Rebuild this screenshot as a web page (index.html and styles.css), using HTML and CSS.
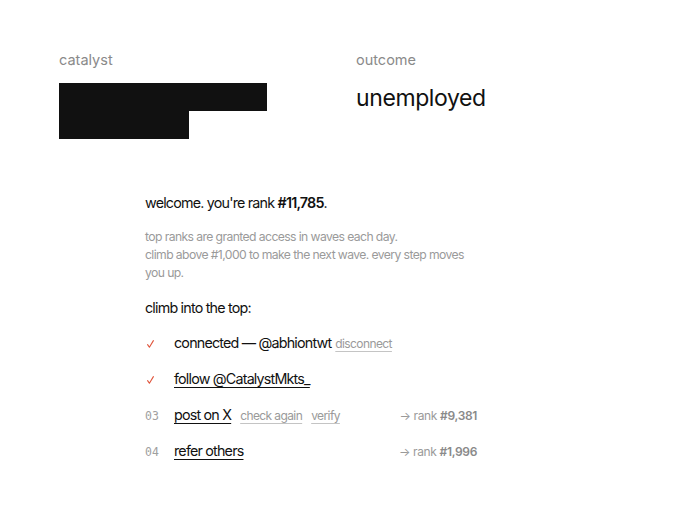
FILE: index.html
```html
<!DOCTYPE html>
<html>
<head>
<meta charset="utf-8">
<link rel="stylesheet" href="styles.css">
</head>
<body>
<div class="page">
  <header class="top">
    <div class="col">
      <div class="label">catalyst</div>
      <div class="redact">
        <div class="bar bar1"></div>
        <div class="bar bar2"></div>
      </div>
    </div>
    <div class="col">
      <div class="label">outcome</div>
      <div class="outcome">unemployed</div>
    </div>
  </header>
  <main class="panel">
    <p class="welcome">welcome. you're rank <b>#11,785</b>.</p>
    <p class="info">top ranks are granted access in waves each day.<br>climb above #1,000 to make the next wave. every step moves you up.</p>
    <p class="climb">climb into the top:</p>
    <ul class="steps">
      <li class="step">
        <span class="mark"><svg class="check" width="7" height="8" viewBox="0 0 7 8"><polyline points="0.6,4.6 2.4,7.2 6.4,0.6" fill="none" stroke="#e0553c" stroke-width="1.1" stroke-linecap="round" stroke-linejoin="round"/></svg></span>
        <span class="main">connected — @abhiontwt</span>
        <a class="sub first">disconnect</a>
      </li>
      <li class="step">
        <span class="mark"><svg class="check" width="7" height="8" viewBox="0 0 7 8"><polyline points="0.6,4.6 2.4,7.2 6.4,0.6" fill="none" stroke="#e0553c" stroke-width="1.1" stroke-linecap="round" stroke-linejoin="round"/></svg></span>
        <a class="main link">follow @CatalystMkts_</a>
      </li>
      <li class="step">
        <span class="mark num">03</span>
        <a class="main link">post on X</a>
        <a class="sub">check again</a>
        <a class="sub">verify</a>
        <span class="rank">→ rank <b>#9,381</b></span>
      </li>
      <li class="step">
        <span class="mark num">04</span>
        <a class="main link">refer others</a>
        <span class="rank">→ rank <b>#1,996</b></span>
      </li>
    </ul>
  </main>
</div>
</body>
</html>
```
FILE: styles.css
```css
* { box-sizing: border-box; }
html, body { margin: 0; padding: 0; background: #fff; }
body {
  font-family: Inter, "Noto Sans", sans-serif;
  color: #111;
  -webkit-font-smoothing: antialiased;
}
.page {
  padding: 51px 0 0 59px;
}
.top {
  display: grid;
  grid-template-columns: 297px 1fr;
}
.label {
  font-size: 14.5px;
  color: #8a8a8a;
  line-height: 18px;
}
.redact {
  margin-top: 14px;
}
.bar { background: #111; height: 28px; }
.bar1 { width: 208px; }
.bar2 { width: 130px; }
.outcome {
  margin-top: 15px;
  font-size: 23px;
  line-height: 28px;
  letter-spacing: -0.4px;
  color: #111;
}
.panel {
  margin: 54px 0 0 86px;
  width: 332px;
}
.welcome {
  margin: 0;
  font-size: 14.3px;
  line-height: 20px;
  letter-spacing: -0.8px;
}
.welcome b { font-weight: 600; }
.info {
  margin: 15px 0 0;
  font-size: 12.2px;
  line-height: 18px;
  color: #9a9a9a;
  letter-spacing: -0.6px;
}
.climb {
  margin: 16px 0 0;
  font-size: 14.3px;
  line-height: 20px;
  letter-spacing: -0.8px;
}
.steps {
  list-style: none;
  margin: 16px 0 0;
  padding: 0;
}
.step {
  display: flex;
  align-items: baseline;
  height: 36px;
  font-size: 14.3px;
  letter-spacing: -0.8px;
}
.mark {
  width: 29px;
  flex: none;
}
.check {
  margin-left: 2px;
  vertical-align: 0;
}
.num {
  font-family: "DejaVu Sans Mono", monospace;
  font-size: 11.5px;
  color: #a0a0a0;
  letter-spacing: 0;
}
.link {
  text-decoration: underline;
  text-decoration-thickness: 1px;
  text-underline-offset: 3px;
  color: #111;
}
.sub {
  font-size: 12px;
  color: #9a9a9a;
  margin-left: 9px;
  letter-spacing: -0.6px;
  text-decoration: underline;
  text-decoration-color: #c4c4c4;
  text-decoration-thickness: 1px;
  text-underline-offset: 3px;
}
.sub.first { margin-left: 4px; }
.rank {
  margin-left: auto;
  font-size: 12px;
  color: #9a9a9a;
  letter-spacing: -0.35px;
}
.rank b { font-weight: 600; color: #8a8a8a; }
```
